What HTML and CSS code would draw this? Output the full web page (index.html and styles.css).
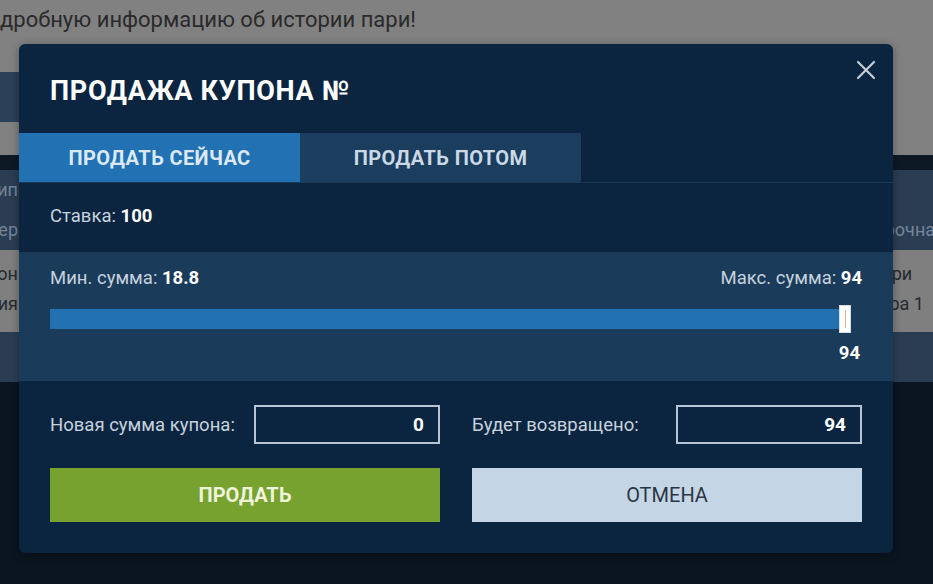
FILE: index.html
```html
<!DOCTYPE html>
<html lang="ru">

<head>
  <meta charset="UTF-8">
  <meta name="viewport" content="width=device-width, initial-scale=1.0">
  <title>Продажа купона</title>
  <link rel="stylesheet" href="styles.css">
</head>

<body>
  <!-- Страница под затемнением -->
  <div class="page">
    <div class="page-top">
      <p class="page-note">дробную информацию об истории пари!</p>
      <div class="page-chip"></div>
    </div>
    <div class="page-stripe"></div>
    <div class="page-table">
      <div class="page-row">
        <span class="cell-l"><span>Тип</span></span>
        <span class="cell-r"></span>
      </div>
      <div class="page-row">
        <span class="cell-l"><span>Категер</span></span>
        <span class="cell-r shift">Срочная</span>
      </div>
      <div class="page-box">
        <div class="page-row">
          <span class="cell-l"><span>Купон</span></span>
          <span class="cell-r">Пари</span>
        </div>
        <div class="page-row">
          <span class="cell-l"><span>Линия</span></span>
          <span class="cell-r">Игра 1</span>
        </div>
      </div>
    </div>
  </div>

  <!-- Окно продажи купона -->
  <div class="modal">
    <button class="modal-close" aria-label="Закрыть">
      <svg width="20" height="20" viewBox="0 0 20 20">
        <path d="M2 2 L18 18 M18 2 L2 18" stroke="#c4ced8" stroke-width="2.2" stroke-linecap="round" fill="none" />
      </svg>
    </button>
    <h2 class="modal-title">ПРОДАЖА КУПОНА №</h2>

    <div class="tabs">
      <div class="tab active">ПРОДАТЬ СЕЙЧАС</div>
      <div class="tab">ПРОДАТЬ ПОТОМ</div>
    </div>

    <div class="stake">Ставка: <b>100</b></div>

    <div class="range">
      <div class="range-labels">
        <span>Мин. сумма: <b>18.8</b></span>
        <span>Макс. сумма: <b>94</b></span>
      </div>
      <div class="range-track">
        <div class="range-fill"></div>
        <div class="range-thumb"></div>
      </div>
      <div class="range-value">94</div>
    </div>

    <div class="sell-form">
      <div class="fields">
        <div class="field">
          <span>Новая сумма купона:</span>
          <span class="field-box">0</span>
        </div>
        <div class="field">
          <span>Будет возвращено:</span>
          <span class="field-box">94</span>
        </div>
      </div>
      <div class="actions">
        <button class="btn btn-sell">ПРОДАТЬ</button>
        <button class="btn btn-cancel">ОТМЕНА</button>
      </div>
    </div>
  </div>
</body>

</html>
```

FILE: styles.css
```css
body {
  margin: 0;
  width: 933px;
  height: 584px;
  overflow: hidden;
  position: relative;
  font-family: Roboto, "Liberation Sans", sans-serif;
  background: #0a1521;
}

/* страница за окном */
.page-top {
  height: 155px;
  background: #818181;
  overflow: hidden;
}

.page-note {
  margin: 0;
  padding: 7px 0 0 0;
  font-size: 22px;
  line-height: 26px;
  color: #2a2a2a;
  white-space: nowrap;
}

.page-chip {
  margin-top: 39px;
  width: 80px;
  height: 50px;
  background: #2b4157;
}

.page-stripe {
  height: 15px;
  background: #0d1925;
}

.page-table {
  height: 212px;
  background: #2a3d52;
  font-size: 18px;
  color: #75859a;
}

.page-row {
  display: grid;
  grid-template-columns: 18px 1fr 64px;
  height: 42px;
  align-items: center;
}

.page-row:first-child {
  height: 38px;
}

.page-row .cell-l {
  display: flex;
  justify-content: flex-end;
  overflow: hidden;
  white-space: nowrap;
  grid-column: 1;
}

.page-row .cell-r {
  grid-column: 3;
  white-space: nowrap;
  overflow: hidden;
}

.page-row .cell-r.shift {
  text-indent: 4px;
}

.page-box {
  height: 82px;
  background: #7f7f7f;
  color: #252a30;
  padding-top: 8px;
  box-sizing: border-box;
}

.page-box .page-row {
  height: 30px;
}

/* окно */
.modal {
  position: absolute;
  left: 19px;
  top: 44px;
  width: 874px;
  background: #0b2540;
  border-radius: 6px;
  box-shadow: 0 2px 8px rgba(0, 0, 0, 0.35);
  overflow: hidden;
}

.modal-close {
  position: absolute;
  right: 17px;
  top: 16px;
  width: 20px;
  height: 20px;
  padding: 0;
  border: none;
  background: none;
}

.modal-close svg {
  display: block;
}

.modal-title {
  margin: 0;
  padding: 32px 31px 26px;
  font-size: 27px;
  line-height: 31px;
  letter-spacing: 0.7px;
  font-weight: 700;
  color: #ffffff;
}

.tabs {
  display: flex;
  height: 49px;
  border-bottom: 1px solid #1a3a58;
}

.tab {
  width: 281px;
  display: flex;
  align-items: center;
  justify-content: center;
  background: #1b3d5e;
  color: #cbd9e6;
  font-size: 20px;
  font-weight: 700;
  letter-spacing: 0.4px;
}

.tab.active {
  background: #2271b3;
  color: #dce9f5;
}

.stake {
  padding: 23px 31px 26px;
  font-size: 18.5px;
  line-height: 20px;
  color: #c6d2de;
}

.stake b,
.range b {
  color: #ffffff;
}

.range {
  background: #1b3b5a;
  padding: 16px 31px 18px;
  font-size: 18.5px;
  line-height: 20px;
  color: #c6d2de;
}

.range-labels {
  display: flex;
  justify-content: space-between;
}

.range-track {
  display: flex;
  align-items: center;
  height: 28px;
  margin-top: 17px;
  padding-right: 11px;
}

.range-fill {
  flex-grow: 1;
  height: 20px;
  background: #2271b3;
}

.range-thumb {
  width: 12px;
  height: 28px;
  margin-left: -1px;
  box-sizing: border-box;
  background: #ffffff;
  border: 1px solid #d8dde2;
  display: flex;
  justify-content: center;
  align-items: center;
}

.range-thumb::after {
  content: "";
  width: 1px;
  height: 18px;
  background: #e9b98a;
}

.range-value {
  margin-top: 10px;
  padding-right: 2px;
  text-align: right;
  font-weight: 700;
  color: #ffffff;
}

.sell-form {
  padding: 24px 31px 31px;
}

.fields,
.actions {
  display: grid;
  grid-template-columns: 390px 390px;
  column-gap: 32px;
}

.field {
  display: flex;
  align-items: center;
  justify-content: space-between;
  font-size: 18.5px;
  color: #c6d2de;
}

.field-box {
  width: 186px;
  height: 39px;
  box-sizing: border-box;
  border: 2px solid #b6c5d4;
  padding: 0 14px;
  display: flex;
  align-items: center;
  justify-content: flex-end;
  font-size: 19px;
  font-weight: 700;
  color: #ffffff;
}

.actions {
  margin-top: 24px;
}

.btn {
  height: 54px;
  border: none;
  font-family: inherit;
  font-size: 20px;
}

.btn-sell {
  background: #77a22f;
  color: #eef3dc;
  font-weight: 700;
}

.btn-cancel {
  background: #c4d5e5;
  color: #2b3644;
}
```
